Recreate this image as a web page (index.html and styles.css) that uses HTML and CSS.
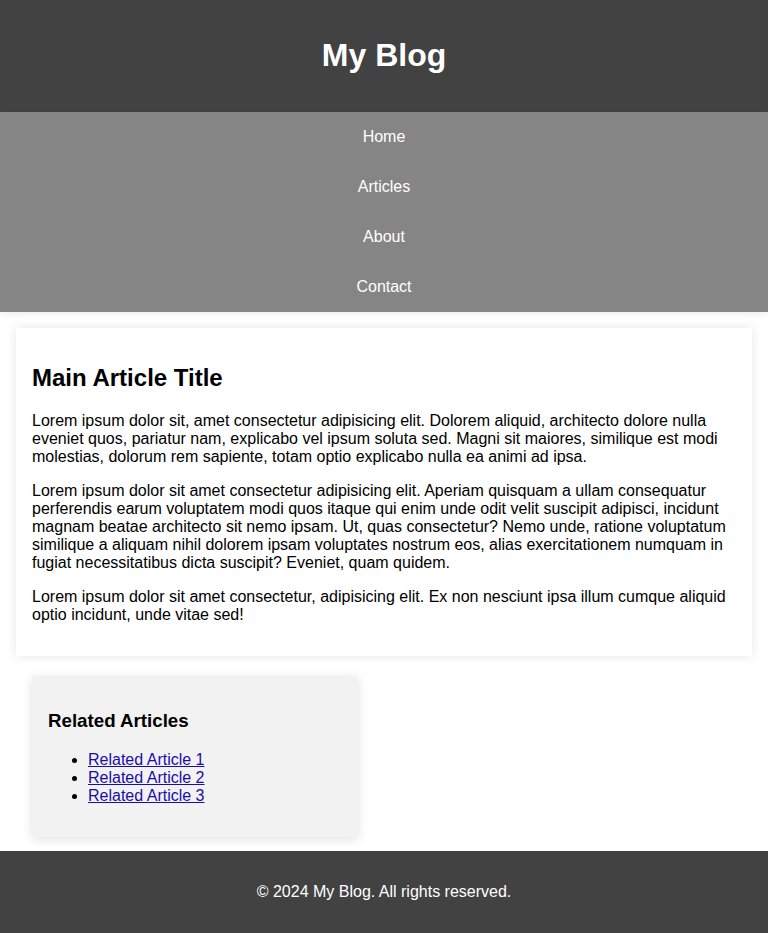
FILE: index.html
```html
<!DOCTYPE html>
<html lang="en">
<head>
<meta charset="utf-8">
<title>My Blog</title>
<link rel="stylesheet" href="styles.css">
</head>
<body>
<header class="site-header">
  <h1>My Blog</h1>
</header>
<nav class="site-nav">
  <ul>
    <li><a href="#">Home</a></li>
    <li><a href="#">Articles</a></li>
    <li><a href="#">About</a></li>
    <li><a href="#">Contact</a></li>
  </ul>
</nav>
<main class="content">
  <article class="card">
    <h2>Main Article Title</h2>
    <p>Lorem ipsum dolor sit, amet consectetur adipisicing elit. Dolorem aliquid, architecto dolore nulla eveniet quos, pariatur nam, explicabo vel ipsum soluta sed. Magni sit maiores, similique est modi molestias, dolorum rem sapiente, totam optio explicabo nulla ea animi ad ipsa.</p>
    <p>Lorem ipsum dolor sit amet consectetur adipisicing elit. Aperiam quisquam a ullam consequatur perferendis earum voluptatem modi quos itaque qui enim unde odit velit suscipit adipisci, incidunt magnam beatae architecto sit nemo ipsam. Ut, quas consectetur? Nemo unde, ratione voluptatum similique a aliquam nihil dolorem ipsam voluptates nostrum eos, alias exercitationem numquam in fugiat necessitatibus dicta suscipit? Eveniet, quam quidem.</p>
    <p>Lorem ipsum dolor sit amet consectetur, adipisicing elit. Ex non nesciunt ipsa illum cumque aliquid optio incidunt, unde vitae sed!</p>
  </article>
  <aside class="related">
    <h3>Related Articles</h3>
    <ul>
      <li><a href="#">Related Article 1</a></li>
      <li><a href="#">Related Article 2</a></li>
      <li><a href="#">Related Article 3</a></li>
    </ul>
  </aside>
</main>
<footer class="site-footer">
  <p>&copy; 2024 My Blog. All rights reserved.</p>
</footer>
</body>
</html>
```
FILE: styles.css
```css
html, body {
  margin: 0;
  padding: 0;
}
body {
  font-family: "Liberation Sans", Arial, sans-serif;
  font-size: 16px;
  color: #000;
  background: #fff;
}
.site-header {
  background: #424242;
  color: #fff;
  text-align: center;
  padding: 16px;
}
.site-header h1 {
  margin: 21.44px 0;
  font-size: 32px;
}
.site-nav {
  background: #858585;
  box-shadow: 0 2px 6px rgba(0,0,0,0.08);
}
.site-nav ul {
  list-style: none;
  margin: 0;
  padding: 0;
}
.site-nav li {
  height: 50px;
  display: flex;
  align-items: center;
  justify-content: center;
}
.site-nav a {
  color: #fff;
  text-decoration: none;
}
.content {
  padding: 16px 16px 14px;
}
.card {
  background: #fff;
  padding: 16px;
  box-shadow: 0 0 10px rgba(0,0,0,0.1);
}
.card h2 {
  font-size: 24px;
  margin: 19.92px 0;
}
.card p {
  margin: 16px 0;
}
.related {
  width: 294px;
  margin: 20px 16px 0;
  padding: 16px;
  background: #f2f2f2;
  box-shadow: 0 2px 10px rgba(0,0,0,0.12);
}
.related h3 {
  font-size: 18.72px;
  margin: 18.72px 0;
}
.related ul {
  margin: 16px 0;
  padding-left: 40px;
}
.related a {
  color: #1a0dab;
}
.site-footer {
  background: #424242;
  color: #fff;
  text-align: center;
  padding: 16px;
}
.site-footer p {
  margin: 16px 0;
}
```
